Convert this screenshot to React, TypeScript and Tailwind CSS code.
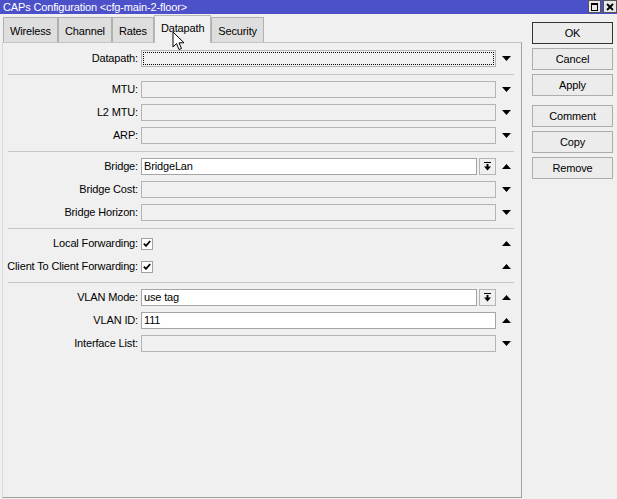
// CAPs Configuration — aba Datapath (janela estilo WinBox)

import type { ReactNode } from 'react';

function ArrowDown() {
  return (
    <svg width="9" height="5" viewBox="0 0 9 5">
      <polygon points="0,0 9,0 4.5,5" fill="#000" />
    </svg>
  );
}

function ArrowUp() {
  return (
    <svg width="9" height="5" viewBox="0 0 9 5">
      <polygon points="0,5 9,5 4.5,0" fill="#000" />
    </svg>
  );
}

function DropIcon() {
  return (
    <svg width="7" height="9" viewBox="0 0 7 9">
      <rect x="0" y="0" width="7" height="1" fill="#000" />
      <rect x="2.5" y="2" width="2" height="3" fill="#000" />
      <polygon points="0,4.5 7,4.5 3.5,8.5" fill="#000" />
    </svg>
  );
}

function Row({ label, children, arrow }: { label: string; children?: ReactNode; arrow?: 'up' | 'down' }) {
  return (
    <div className="flex h-[23px] items-center">
      <div className="w-[135px] whitespace-nowrap text-right">{label}:</div>
      <div className="ml-[3px] flex w-[355px] items-center">{children}</div>
      <div className="flex w-[20px] justify-center">
        {arrow === 'up' && <ArrowUp />}
        {arrow === 'down' && <ArrowDown />}
      </div>
    </div>
  );
}

function Field({ value, enabled, focused }: { value?: string; enabled?: boolean; focused?: boolean }) {
  return (
    <div
      className={`flex h-[17px] flex-1 items-center border px-[2px] ${
        enabled ? 'border-[#a5a5a5] bg-white' : 'border-[#b4b4b4] bg-[#f0f0f0]'
      } ${focused ? 'outline-1 -outline-offset-3 outline-dotted outline-black' : ''}`}
    >
      {value}
    </div>
  );
}

function Check() {
  return (
    <div className="flex h-[12px] w-[12px] items-center justify-center border border-[#a0a0a0] bg-white">
      <svg width="8" height="7" viewBox="0 0 8 7">
        <path d="M0.8 3.6 L3 5.8 L7.2 1" stroke="#000" strokeWidth="1.8" fill="none" />
      </svg>
    </div>
  );
}

function Sep() {
  return (
    <div className="flex h-[8px] items-center">
      <div className="ml-[5px] w-[506px] border-t border-[#c6c6c6]" />
    </div>
  );
}

const tabs = ['Wireless', 'Channel', 'Rates', 'Datapath', 'Security'];

function Btn({ label, primary, extraTop }: { label: string; primary?: boolean; extraTop?: boolean }) {
  return (
    <div
      className={`flex h-[22px] w-[81px] items-center justify-center border bg-[#ececec] ${
        primary ? 'border-[#333]' : 'border-[#adadad]'
      } ${extraTop ? 'mt-[9px]' : 'mt-[4px]'}`}
    >
      {label}
    </div>
  );
}

export default function App() {
  return (
    <div
      className="relative flex h-[499px] w-[617px] flex-col overflow-hidden bg-[#f0f0f0] text-[11px] tracking-[-0.15px] text-black"
      style={{ fontFamily: '"Liberation Sans", Arial, sans-serif' }}
    >
      {/* Barra de título */}
      <div className="flex h-[14px] items-center justify-between bg-[#4d51c9] pl-[3px] text-white">
        <span className="leading-none">{'CAPs Configuration <cfg-main-2-floor>'}</span>
        <div className="flex h-[14px] items-start gap-[2px]">
          <div className="flex h-[13px] w-[13px] items-center justify-center border border-[#555] bg-[#e8e8e8]">
            <div className="h-[8px] w-[7px] border border-black border-t-2" />
          </div>
          <div className="flex h-[13px] w-[14px] items-center justify-center border border-[#555] bg-[#e8e8e8]">
            <svg width="8" height="8" viewBox="0 0 8 8">
              <path d="M1 1 L7 7 M7 1 L1 7" stroke="#000" strokeWidth="1.8" />
            </svg>
          </div>
        </div>
      </div>

      <div className="flex flex-1">
        {/* Coluna esquerda: abas + painel */}
        <div className="flex w-[522px] flex-col">
          <div className="flex h-[28px] items-end pl-[3px]">
            {tabs.map((t) => {
              const active = t === 'Datapath';
              return (
                <div
                  key={t}
                  className={`flex items-center border border-b-0 px-[6px] ${
                    active
                      ? 'relative z-10 -mb-px h-[28px] border-[#b8b8b8] bg-[#f0f0f0] pb-[2px]'
                      : 'h-[25px] border-[#b0b0b0] bg-[#dedede] pt-[3px]'
                  }`}
                >
                  {t}
                </div>
              );
            })}
          </div>

          <div className="ml-[2px] flex-1 border border-t-[#c4c4c4] border-l-[#dadada] border-r-[#a0a0a0] border-b-[#a0a0a0] pt-[4px]">
            <Row label="Datapath" arrow="down">
              <Field focused />
            </Row>
            <Sep />
            <Row label="MTU" arrow="down">
              <Field />
            </Row>
            <Row label="L2 MTU" arrow="down">
              <Field />
            </Row>
            <Row label="ARP" arrow="down">
              <Field />
            </Row>
            <Sep />
            <Row label="Bridge" arrow="up">
              <Field value="BridgeLan" enabled />
              <div className="ml-[2px] flex h-[17px] w-[17px] items-center justify-center border border-[#b4b4b4] bg-[#f0f0f0]">
                <DropIcon />
              </div>
            </Row>
            <Row label="Bridge Cost" arrow="down">
              <Field />
            </Row>
            <Row label="Bridge Horizon" arrow="down">
              <Field />
            </Row>
            <Sep />
            <Row label="Local Forwarding" arrow="up">
              <Check />
            </Row>
            <Row label="Client To Client Forwarding" arrow="up">
              <Check />
            </Row>
            <Sep />
            <Row label="VLAN Mode" arrow="up">
              <Field value="use tag" enabled />
              <div className="ml-[2px] flex h-[17px] w-[17px] items-center justify-center border border-[#b4b4b4] bg-[#f0f0f0]">
                <DropIcon />
              </div>
            </Row>
            <Row label="VLAN ID" arrow="up">
              <Field value="111" enabled />
            </Row>
            <Row label="Interface List" arrow="down">
              <Field />
            </Row>
          </div>
          <div className="h-[1px]" />
        </div>

        {/* Botões à direita */}
        <div className="ml-[10px] flex flex-col pt-[4px]">
          <Btn label="OK" primary />
          <Btn label="Cancel" />
          <Btn label="Apply" />
          <Btn label="Comment" extraTop />
          <Btn label="Copy" />
          <Btn label="Remove" />
        </div>
      </div>

      {/* Cursor do mouse sobre a aba */}
      <svg className="absolute left-[172px] top-[31px] z-20" width="13" height="20" viewBox="0 0 13 20">
        <path d="M1 1 L1 16 L4.5 12.5 L7 18.5 L9.5 17.5 L7 11.8 L12 11.8 Z" fill="#fff" stroke="#000" strokeWidth="1" strokeLinejoin="miter" />
      </svg>
    </div>
  );
}
